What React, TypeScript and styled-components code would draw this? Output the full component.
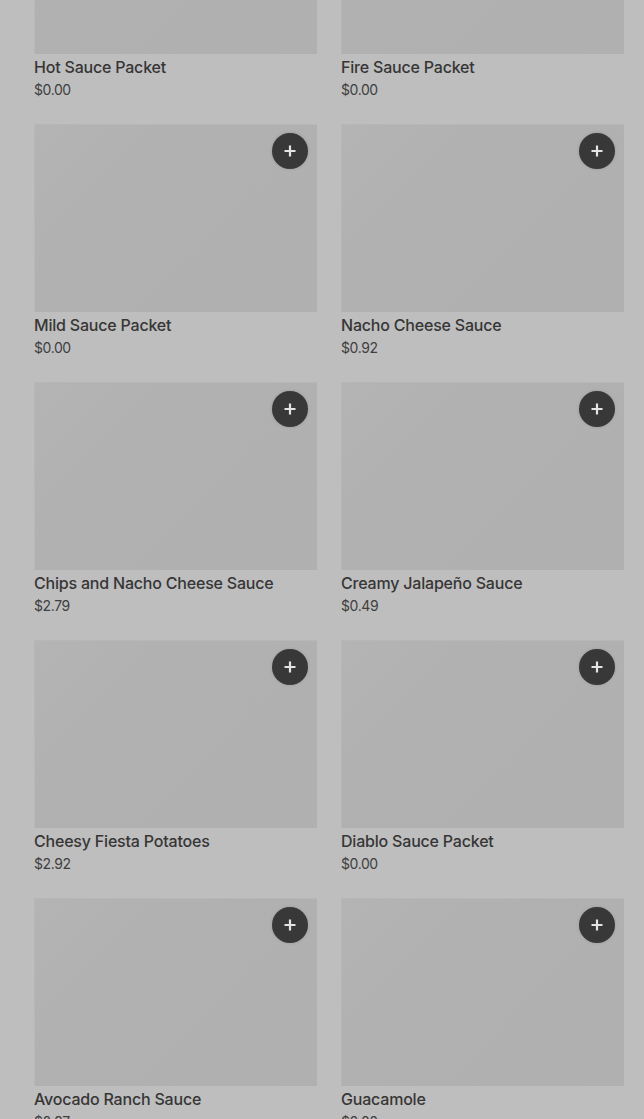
import React from "react"
import styled, { createGlobalStyle } from "styled-components"

const GlobalStyle = createGlobalStyle`
    html, body {
        margin: 0;
        padding: 0;
        background-color: #bebebe;
        font-family: Inter, "Noto Sans", "Liberation Sans", sans-serif;
        overflow: hidden;
    }
`

const Page = styled.div`
    height: 1119px;
    overflow: hidden;
    background-color: #bebebe;
`

const Grid = styled.div`
    margin-top: -134px;
    padding: 0 20px 0 34px;
    display: grid;
    grid-template-columns: 283px 283px;
    column-gap: 24px;
    row-gap: 24px;
`

const Card = styled.div`
    display: flex;
    flex-direction: column;
`

const Thumb = styled.div`
    position: relative;
    height: 188px;
    background: linear-gradient(135deg, #b4b4b4 0%, #b1b1b1 30%, #b0b0b0 100%);
    box-shadow: inset 1px 1px 0 #b7b7b7;
`

const AddButton = styled.button`
    position: absolute;
    top: 9px;
    right: 9px;
    width: 36px;
    height: 36px;
    border-radius: 50%;
    border: 0;
    padding: 0;
    background-color: #383838;
    box-shadow: 0 0 3px rgba(0, 0, 0, 0.15);
    display: flex;
    align-items: center;
    justify-content: center;
    cursor: pointer;
`

const Title = styled.div`
    margin-top: 2px;
    font-size: 16px;
    line-height: 22px;
    font-weight: 500;
    color: #363636;
    letter-spacing: -0.2px;
`

const Price = styled.div`
    margin-top: 2px;
    font-size: 14px;
    line-height: 20px;
    font-weight: 400;
    color: #404040;
    letter-spacing: -0.4px;
`

const items = [
    { name: "Hot Sauce Packet", price: "$0.00", add: false },
    { name: "Fire Sauce Packet", price: "$0.00", add: false },
    { name: "Mild Sauce Packet", price: "$0.00", add: true },
    { name: "Nacho Cheese Sauce", price: "$0.92", add: true },
    { name: "Chips and Nacho Cheese Sauce", price: "$2.79", add: true },
    { name: "Creamy Jalapeño Sauce", price: "$0.49", add: true },
    { name: "Cheesy Fiesta Potatoes", price: "$2.92", add: true },
    { name: "Diablo Sauce Packet", price: "$0.00", add: true },
    { name: "Avocado Ranch Sauce", price: "$0.97", add: true },
    { name: "Guacamole", price: "$0.00", add: true },
]

function PlusIcon() {
    return (
        <svg width="14" height="14" viewBox="0 0 14 14">
            <path d="M7 1.5v11M1.5 7h11" stroke="#e4e4e4" strokeWidth="2.2" />
        </svg>
    )
}

export default function App() {
    return (
        <>
        <GlobalStyle />
        <Page>
            <Grid>
                {items.map((item, i) => (
                    <Card key={i}>
                        <Thumb>
                            {item.add && (
                                <AddButton aria-label="Add">
                                    <PlusIcon />
                                </AddButton>
                            )}
                        </Thumb>
                        <Title>{item.name}</Title>
                        <Price>{item.price}</Price>
                    </Card>
                ))}
            </Grid>
        </Page>
        </>
    )
}
